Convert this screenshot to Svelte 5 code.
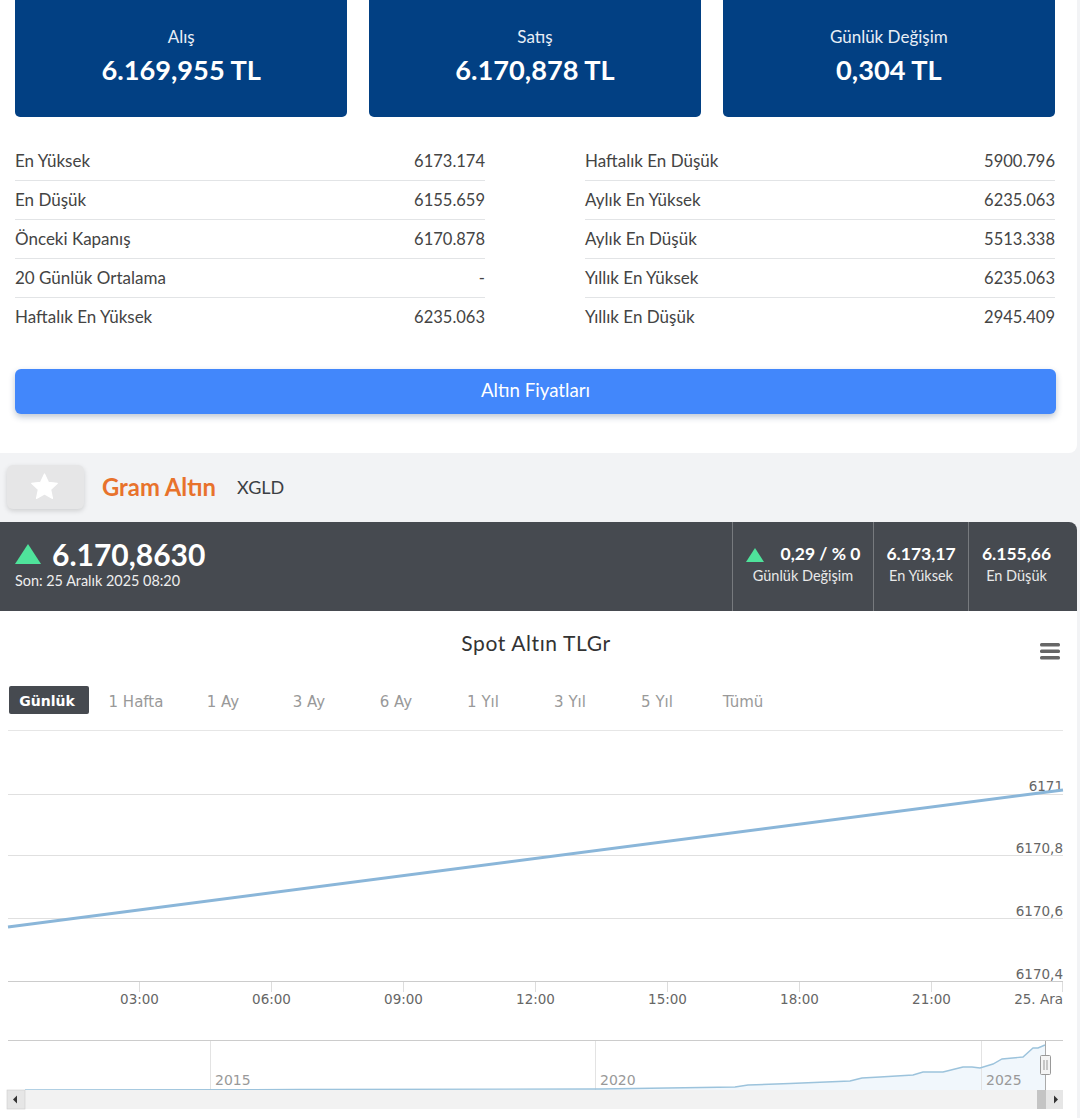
<script>
  const cards = [
    { label: 'Alış', value: '6.169,955 TL' },
    { label: 'Satış', value: '6.170,878 TL' },
    { label: 'Günlük Değişim', value: '0,304 TL' }
  ];
  const left = [
    ['En Yüksek', '6173.174'],
    ['En Düşük', '6155.659'],
    ['Önceki Kapanış', '6170.878'],
    ['20 Günlük Ortalama', '-'],
    ['Haftalık En Yüksek', '6235.063']
  ];
  const right = [
    ['Haftalık En Düşük', '5900.796'],
    ['Aylık En Yüksek', '6235.063'],
    ['Aylık En Düşük', '5513.338'],
    ['Yıllık En Yüksek', '6235.063'],
    ['Yıllık En Düşük', '2945.409']
  ];
  const ranges = [
    ['1 Hafta', 136], ['1 Ay', 223], ['3 Ay', 309], ['6 Ay', 396],
    ['1 Yıl', 483], ['3 Yıl', 570], ['5 Yıl', 657], ['Tümü', 743]
  ];
  const grid = [
    [794.5, '6171', 791], [855.5, '6170,8', 853], [918.5, '6170,6', 916], [981.5, '6170,4', 979]
  ];
  const ticks = [['03:00', 139.5], ['06:00', 271.5], ['09:00', 403.5], ['12:00', 535.5], ['15:00', 667.5], ['18:00', 799.5], ['21:00', 931.5]];
  const navLine = '25,1090 300,1089.5 600,1089 735,1087 748,1085 790,1083.5 850,1081 862,1078 880,1077 913,1075 923,1072 943,1072 963,1067 972,1067 980,1068 993,1064 1002,1059 1023,1057 1033,1048 1038,1048 1045,1045';
</script>

<div class="page">
  <section class="panel">
    <div class="cards">
      {#each cards as card}
        <div class="card">
          <span class="card-label">{card.label}</span>
          <strong class="card-value">{card.value}</strong>
        </div>
      {/each}
    </div>

    <div class="tables">
      {#each [left, right] as rows}
        <ul class="rows">
          {#each rows as row}
            <li><span>{row[0]}</span><span class="num">{row[1]}</span></li>
          {/each}
        </ul>
      {/each}
    </div>

    <button class="prices">Altın Fiyatları</button>
  </section>

  <header class="title-row">
    <button class="fav" aria-label="Favori">
      <svg width="29" height="29" viewBox="0 0 24 24"><path d="M12 1.6l3.2 6.9 7.4.9-5.5 5.1 1.5 7.4L12 18.1l-6.6 3.8 1.5-7.4L1.4 9.4l7.4-.9z" fill="#fff" stroke="#fff" stroke-width="1" stroke-linejoin="round"/></svg>
    </button>
    <h1>Gram Altın</h1>
    <span class="code">XGLD</span>
  </header>

  <div class="quote">
    <div class="quote-main">
      <div class="price">
        <span class="arrow big"></span>
        <b>6.170,8630</b>
      </div>
      <small>Son: 25 Aralık 2025 08:20</small>
    </div>
    <div class="cell change">
      <div class="cell-top"><span class="arrow"></span><b>0,29 / % 0</b></div>
      <span>Günlük Değişim</span>
    </div>
    <div class="cell high"><b>6.173,17</b><span>En Yüksek</span></div>
    <div class="cell low"><b>6.155,66</b><span>En Düşük</span></div>
  </div>

  <div class="chart">
    <svg width="1077" height="507" viewBox="0 611 1077 507">
      <text class="chart-title" x="536" y="651" text-anchor="middle">Spot Altın TLGr</text>
      <g fill="#666">
        <rect x="1040" y="643" width="20" height="3.4" rx="1.5" />
        <rect x="1040" y="649.5" width="20" height="3.4" rx="1.5" />
        <rect x="1040" y="656" width="20" height="3.4" rx="1.5" />
      </g>

      <rect x="9" y="686" width="80" height="28" rx="2" fill="#464a50" />
      <text class="range active" x="47" y="706" text-anchor="middle">Günlük</text>
      {#each ranges as r}
        <text class="range" x={r[1]} y="706.5" text-anchor="middle">{r[0]}</text>
      {/each}
      <line x1="8" x2="1063" y1="730.5" y2="730.5" stroke="#e6e6e6" />

      {#each grid as g}
        <line x1="8" x2="1063" y1={g[0]} y2={g[0]} stroke="#e0e0e0" />
        <text class="axis" x="1063" y={g[2]} text-anchor="end">{g[1]}</text>
      {/each}
      <line x1="8" y1="927" x2="1063" y2="790" stroke="#8ab6d9" stroke-width="3" />

      <line x1="8" x2="1063" y1="981.5" y2="981.5" stroke="#ccc" />
      {#each ticks as t}
        <line x1={t[1]} x2={t[1]} y1="982" y2="992" stroke="#ddd" />
        <text class="axis" x={t[1]} y="1004" text-anchor="middle">{t[0]}</text>
      {/each}
      <line x1="1062.5" x2="1062.5" y1="982" y2="992" stroke="#ddd" />
      <text class="axis" x="1063" y="1004" text-anchor="end">25. Ara</text>

      <polygon points="{navLine} 1045,1090 25,1090" fill="#f1f7fc" />
      <line x1="8" x2="1063" y1="1040.5" y2="1040.5" stroke="#ccc" />
      {#each [[210.5, '2015'], [595.5, '2020'], [981.5, '2025']] as n}
        <line x1={n[0]} x2={n[0]} y1="1041" y2="1090" stroke="#e3e3e3" />
        <text class="nav-label" x={n[0] + 4.5} y="1085">{n[1]}</text>
      {/each}
      <polyline points={navLine} fill="none" stroke="#9cc3dc" stroke-width="1.4" />
      <line x1="1045.5" x2="1045.5" y1="1041" y2="1090" stroke="#aaa" />
      <rect x="1040.5" y="1055.5" width="10" height="19" rx="1" fill="#f4f4f4" stroke="#999" />
      <path d="M1044 1060v10M1047 1060v10" stroke="#999" />

      <rect x="7" y="1090" width="1056" height="19" fill="#f2f2f2" />
      <rect x="7" y="1090" width="18" height="19" fill="#e6e6e6" stroke="#ccc" stroke-width="0.6" />
      <path d="M13 1099.5l4-4v8z" fill="#333" />
      <rect x="1037" y="1090" width="9" height="19" fill="#c4c4c4" />
      <rect x="1046" y="1090" width="17" height="19" fill="#e6e6e6" />
      <path d="M1058 1099.5l-4-4v8z" fill="#333" />
    </svg>
  </div>
</div>

<style>
  :global(body) {
    margin: 0;
    background: #f2f3f5;
  }

  .page {
    width: 1080px;
    height: 1118px;
    overflow: hidden;
    font-family: "Lato", "Liberation Sans", sans-serif;
    color: #3c3f44;
  }

  .panel {
    box-sizing: border-box;
    width: 1077px;
    height: 453px;
    padding: 0 22px 0 15px;
    background: #fff;
    border-bottom-right-radius: 8px;
  }

  .cards {
    display: grid;
    grid-template-columns: repeat(3, 1fr);
    gap: 21.5px;
  }

  .card {
    display: flex;
    flex-direction: column;
    align-items: center;
    height: 117px;
    padding-top: 26px;
    box-sizing: border-box;
    background: #024083;
    border-radius: 0 0 5px 5px;
    color: #fff;
  }

  .card-label {
    font-size: 17px;
    line-height: 22px;
    color: #e8eef6;
  }

  .card-value {
    margin-top: 4px;
    font-size: 27.2px;
    line-height: 36px;
    font-weight: 700;
  }

  .tables {
    display: grid;
    grid-template-columns: 470px 470px;
    gap: 100px;
    margin-top: 25px;
  }

  .rows {
    margin: 0;
    padding: 0;
    list-style: none;
  }

  .rows li {
    display: flex;
    justify-content: space-between;
    align-items: baseline;
    box-sizing: border-box;
    height: 39px;
    line-height: 37px;
    font-size: 17px;
    color: #444;
    border-bottom: 1px solid #e2e4e6;
  }

  .rows li:last-child {
    border-bottom: none;
  }

  .num {
    font-size: 16.5px;
  }

  .prices {
    display: block;
    width: 1041px;
    height: 45px;
    margin-top: 32px;
    padding: 0 0 3px;
    border: none;
    border-radius: 6px;
    background: #4287fb;
    color: #fff;
    font: 400 18.7px "Lato", "Liberation Sans", sans-serif;
    box-shadow: 0 3px 6px rgba(40, 70, 110, 0.3);
  }

  .title-row {
    display: flex;
    align-items: center;
    height: 69px;
    padding: 0 0 2px 7px;
    box-sizing: border-box;
  }

  .fav {
    display: flex;
    align-items: center;
    justify-content: center;
    width: 77px;
    height: 44px;
    padding: 0 3px 0 0;
    border: none;
    border-radius: 6px;
    background: #e6e6e7;
    box-shadow: 0 2px 5px rgba(0, 0, 0, 0.15);
  }

  h1 {
    margin: 0 0 0 18px;
    font-size: 23.8px;
    font-weight: 700;
    color: #e8722c;
  }

  .code {
    margin-left: 21px;
    font-size: 18px;
    color: #3c3f44;
  }

  .quote {
    display: flex;
    box-sizing: border-box;
    width: 1077px;
    height: 89px;
    background: #464a50;
    border-top-right-radius: 8px;
    color: #fff;
  }

  .quote-main {
    flex: 1;
    padding: 15px 0 0 15px;
  }

  .price {
    display: flex;
    align-items: center;
    gap: 11px;
  }

  .price b {
    font-size: 30px;
    line-height: 34px;
  }

  .quote-main small {
    display: block;
    margin-top: 1px;
    font-size: 14.4px;
    color: #eee;
  }

  .arrow {
    width: 0;
    height: 0;
    border-left: 9px solid transparent;
    border-right: 9px solid transparent;
    border-bottom: 14px solid #4fe39b;
  }

  .arrow.big {
    border-left-width: 13px;
    border-right-width: 13px;
    border-bottom-width: 20px;
  }

  .cell {
    display: flex;
    flex-direction: column;
    align-items: center;
    box-sizing: border-box;
    padding-top: 21px;
    border-left: 1px solid #777a7e;
    font-size: 14.5px;
    color: #e8e8e8;
  }

  .cell b {
    font-size: 17.5px;
    line-height: 21px;
    color: #fff;
    margin-bottom: 2px;
  }

  .cell span:last-child {
    line-height: 20px;
  }

  .cell-top {
    display: flex;
    align-items: center;
    gap: 17px;
  }

  .change { width: 141px; }
  .high { width: 95px; }
  .low { width: 109px; padding-right: 13px; }

  .chart {
    width: 1077px;
    height: 507px;
    background: #fff;
  }

  .chart svg {
    display: block;
  }

  .chart-title {
    font: 400 21px "Lato", "Liberation Sans", sans-serif;
    letter-spacing: 0.6px;
    fill: #333;
  }

  .range {
    font: 400 15px "DejaVu Sans", sans-serif;
    fill: #999;
  }

  .range.active {
    font-weight: 700;
    font-size: 14px;
    fill: #fff;
  }

  .axis {
    font: 400 13.5px "DejaVu Sans", sans-serif;
    fill: #666;
  }

  .nav-label {
    font: 400 14px "DejaVu Sans", sans-serif;
    fill: #999;
  }
</style>
